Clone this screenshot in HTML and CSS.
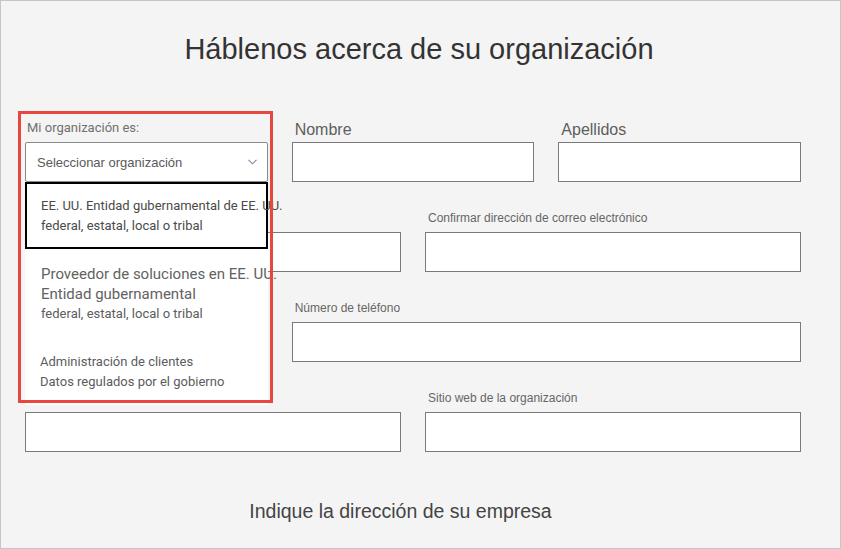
FILE: index.html
```html
<!DOCTYPE html>
<html lang="es">
<head>
<meta charset="utf-8">
<title>Háblenos acerca de su organización</title>
<link rel="stylesheet" href="styles.css">
</head>
<body>
<div class="frame">
  <h1 class="title">Háblenos acerca de su organización</h1>
  <div class="form">
    <div class="field span2 org">
      <div class="lbl ui">Mi organización es:</div>
      <div class="select">
        <span>Seleccionar organización</span>
        <svg class="chev" width="9" height="6" viewBox="0 0 9 6"><polyline points="0.5,0.8 4.5,4.8 8.5,0.8" fill="none" stroke="#7a879a" stroke-width="1.1"/></svg>
      </div>
      <div class="menu">
        <div class="opt opt-sel">
          <div>EE. UU. Entidad gubernamental de EE. UU.</div>
          <div>federal, estatal, local o tribal</div>
        </div>
        <div class="opt opt-two">
          <div class="big">Proveedor de soluciones en EE. UU.</div>
          <div class="big">Entidad gubernamental</div>
          <div>federal, estatal, local o tribal</div>
        </div>
        <div class="opt opt-three">
          <div>Administración de clientes</div>
          <div>Datos regulados por el gobierno</div>
        </div>
      </div>
      <div class="annot"></div>
    </div>
    <div class="field span2">
      <div class="lbl big">Nombre</div>
      <div class="input"></div>
    </div>
    <div class="field span2">
      <div class="lbl big">Apellidos</div>
      <div class="input"></div>
    </div>

    <div class="field span3">
      <div class="lbl"></div>
      <div class="input"></div>
    </div>
    <div class="field span3">
      <div class="lbl">Confirmar dirección de correo electrónico</div>
      <div class="input"></div>
    </div>

    <div class="field span2">
      <div class="lbl"></div>
      <div class="input"></div>
    </div>
    <div class="field span4">
      <div class="lbl">Número de teléfono</div>
      <div class="input"></div>
    </div>

    <div class="field span3">
      <div class="lbl"></div>
      <div class="input"></div>
    </div>
    <div class="field span3">
      <div class="lbl">Sitio web de la organización</div>
      <div class="input"></div>
    </div>
  </div>
  <h2 class="subtitle">Indique la dirección de su empresa</h2>
</div>
</body>
</html>
```

FILE: styles.css
```css
html, body {
  margin: 0;
  padding: 0;
  background: #f4f4f4;
}

.frame {
  width: 841px;
  height: 549px;
  box-sizing: border-box;
  border: 1px solid #c6c6c6;
  background: #f4f4f4;
  font-family: "Liberation Sans", Arial, sans-serif;
  overflow: hidden;
}

.title {
  margin: 0;
  padding: 31px 3px 0 0;
  font-size: 29px;
  line-height: 34px;
  font-weight: normal;
  color: #333333;
  text-align: center;
}

.form {
  margin: 50px 39px 0 24px;
  display: grid;
  grid-template-columns: repeat(6, 1fr);
  column-gap: 24px;
  row-gap: 24px;
}

.field {
  display: flex;
  flex-direction: column;
}

.span2 { grid-column: span 2; }
.span3 { grid-column: span 3; }
.span4 { grid-column: span 4; }

.lbl {
  height: 26px;
  box-sizing: border-box;
  display: flex;
  align-items: flex-end;
  padding: 0 0 6px 3px;
  font-size: 12px;
  line-height: 16px;
  color: #666666;
  white-space: nowrap;
}

.lbl.ui {
  font-family: Roboto, "Liberation Sans", sans-serif;
  font-size: 13px;
  padding-left: 2px;
  color: #707070;
}

.lbl.big {
  font-size: 16px;
  line-height: 18px;
  padding-bottom: 3px;
  color: #5e5e5e;
}

.input {
  height: 40px;
  box-sizing: border-box;
  border: 1px solid #7a7a7a;
  background: #ffffff;
}

.select {
  height: 40px;
  box-sizing: border-box;
  border: 1px solid #8a8a8a;
  border-radius: 2px;
  background: #ffffff;
  display: flex;
  align-items: center;
  justify-content: space-between;
  padding: 0 10px 0 11px;
  font-size: 13px;
  color: #5a5a5a;
}

.chev {
  display: block;
}

.org {
  position: relative;
}

.menu {
  position: absolute;
  top: 66px;
  left: 0;
  width: 100%;
  height: 223px;
  background: #ffffff;
  z-index: 2;
}

.opt {
  box-sizing: border-box;
  white-space: nowrap;
  font-family: Roboto, "Liberation Sans", sans-serif;
  font-size: 13px;
  line-height: 20px;
  color: #5c5c5c;
}

.opt .big {
  font-size: 15px;
  color: #626262;
}

.opt-sel {
  border: 2px solid #000000;
  padding: 12px 8px 11px 14px;
  color: #4a4a4a;
}

.opt-two {
  padding: 15px 8px 14px 16px;
}

.opt-three {
  padding: 14px 8px 13px 15px;
}

.annot {
  position: absolute;
  top: -5px;
  left: -7px;
  width: 255px;
  height: 292px;
  box-sizing: border-box;
  border: 3px solid #e8473f;
  z-index: 3;
  pointer-events: none;
}

.subtitle {
  margin: 47px 0 0 0;
  padding: 0 40px 0 0;
  font-size: 19.5px;
  line-height: 24px;
  font-weight: normal;
  color: #444444;
  text-align: center;
}
```
